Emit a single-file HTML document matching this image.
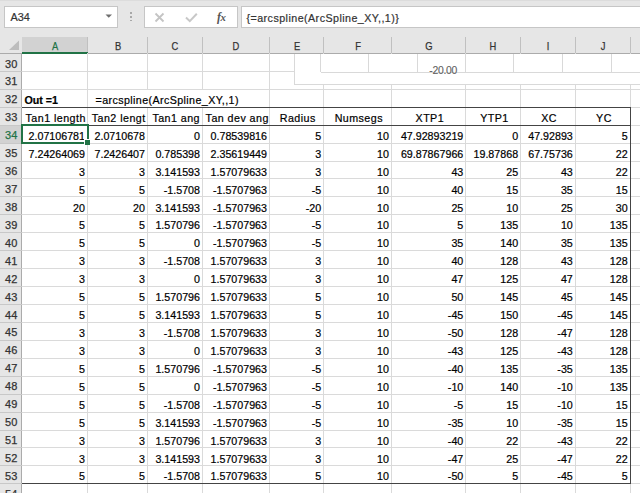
<!DOCTYPE html><html><head><meta charset="utf-8"><style>
*{margin:0;padding:0;box-sizing:border-box}
html,body{width:640px;height:493px;overflow:hidden;background:#e6e6e6;font-family:"Liberation Sans",sans-serif;position:relative}
.a{position:absolute}
.hl{position:absolute;height:1px}
.vl{position:absolute;width:1px}
.t{position:absolute;white-space:pre;font-size:10.7px;line-height:12px;color:#000;-webkit-text-stroke:0.2px currentColor}
.r{text-align:right}
.c{text-align:center}
.hd{position:absolute;font-size:11px;line-height:12px;color:#444;text-align:center;white-space:pre;-webkit-text-stroke:0.25px currentColor}
</style></head><body><div class="hl" style="left:0;top:0;width:640px;background:#dcdcdc"></div>
<div class="a" style="left:4px;top:6px;width:114px;height:22px;background:#fff;border:1px solid #c6c6c6"></div>
<div class="t" style="left:10.5px;top:11.1px;font-size:10.9px;color:#333">A34</div>
<svg class="a" style="left:104px;top:13px" width="10" height="6"><path d="M1.5 1.5 L8 1.5 L4.75 4.8 Z" fill="#6e6e6e"/></svg>
<div class="a" style="left:130.2px;top:12.4px;width:1.5px;height:1.5px;background:#a8a8a8"></div>
<div class="a" style="left:130.2px;top:16.0px;width:1.5px;height:1.5px;background:#a8a8a8"></div>
<div class="a" style="left:130.2px;top:19.599999999999998px;width:1.5px;height:1.5px;background:#a8a8a8"></div>
<div class="a" style="left:144px;top:6px;width:94px;height:22px;background:#fff;border:1px solid #c6c6c6"></div>
<svg class="a" style="left:154px;top:12px" width="12" height="11"><path d="M1.5 1.5 L9.5 9.5 M9.5 1.5 L1.5 9.5" stroke="#c4c4c4" stroke-width="1.8" fill="none"/></svg>
<svg class="a" style="left:185px;top:12px" width="13" height="11"><path d="M1 5.5 L4.8 9.2 L11.8 1.8" stroke="#c8c8c8" stroke-width="2" fill="none"/></svg>
<div class="a" style="left:217px;top:10.6px;font-family:'Liberation Serif',serif;font-style:italic;font-weight:bold;font-size:11.8px;line-height:13px;color:#555;letter-spacing:-0.4px">f<span style="font-size:10.8px">x</span></div>
<div class="a" style="left:240.5px;top:6px;width:410px;height:22px;background:#fff;border:1px solid #c6c6c6"></div>
<div class="t" style="left:246.5px;top:12px;letter-spacing:0.45px;color:#333">{=arcspline(ArcSpline_XY,,1)}</div>
<div class="a" style="left:21.5px;top:53.3px;width:640px;height:500px;background:#fff"></div>
<div class="a" style="left:0;top:37px;width:640px;height:16.299999999999997px;background:#e6e6e6"></div>
<div class="a" style="left:21.5px;top:37px;width:66.0px;height:16.299999999999997px;background:#d2d2d2"></div>
<svg class="a" style="left:8px;top:40px" width="12" height="12"><path d="M11 0.5 L11 10 L1 10 Z" fill="#bdbdbd"/></svg>
<div class="a" style="left:0;top:53.3px;width:21.5px;height:500px;background:#e6e6e6"></div>
<div class="a" style="left:0;top:125.19px;width:21.5px;height:17.93px;background:#d2d2d2"></div>
<div class="hl" style="left:0;top:52.8px;width:640px;background:#ababab"></div>
<div class="vl" style="left:21.0px;top:53.3px;height:500px;background:#ababab"></div>
<div class="vl" style="left:87.0px;top:37px;height:16.299999999999997px;background:#c0c0c0"></div>
<div class="vl" style="left:147.0px;top:37px;height:16.299999999999997px;background:#c0c0c0"></div>
<div class="vl" style="left:202.0px;top:37px;height:16.299999999999997px;background:#c0c0c0"></div>
<div class="vl" style="left:269.0px;top:37px;height:16.299999999999997px;background:#c0c0c0"></div>
<div class="vl" style="left:323.2px;top:37px;height:16.299999999999997px;background:#c0c0c0"></div>
<div class="vl" style="left:391.0px;top:37px;height:16.299999999999997px;background:#c0c0c0"></div>
<div class="vl" style="left:465.3px;top:37px;height:16.299999999999997px;background:#c0c0c0"></div>
<div class="vl" style="left:520.1px;top:37px;height:16.299999999999997px;background:#c0c0c0"></div>
<div class="vl" style="left:574.8px;top:37px;height:16.299999999999997px;background:#c0c0c0"></div>
<div class="vl" style="left:629.7px;top:37px;height:16.299999999999997px;background:#c0c0c0"></div>
<div class="vl" style="left:684.5px;top:37px;height:16.299999999999997px;background:#c0c0c0"></div>
<div class="hd" style="left:34.5px;top:39.8px;width:40px;color:#217346;transform:scaleX(0.85)">A</div>
<div class="hd" style="left:97.5px;top:39.8px;width:40px;color:#333;transform:scaleX(0.85)">B</div>
<div class="hd" style="left:155.0px;top:39.8px;width:40px;color:#333;transform:scaleX(0.85)">C</div>
<div class="hd" style="left:216.0px;top:39.8px;width:40px;color:#333;transform:scaleX(0.85)">D</div>
<div class="hd" style="left:276.6px;top:39.8px;width:40px;color:#333;transform:scaleX(0.85)">E</div>
<div class="hd" style="left:337.6px;top:39.8px;width:40px;color:#333;transform:scaleX(0.85)">F</div>
<div class="hd" style="left:408.65px;top:39.8px;width:40px;color:#333;transform:scaleX(0.85)">G</div>
<div class="hd" style="left:473.20000000000005px;top:39.8px;width:40px;color:#333;transform:scaleX(0.85)">H</div>
<div class="hd" style="left:527.95px;top:39.8px;width:40px;color:#333;transform:scaleX(0.85)">I</div>
<div class="hd" style="left:582.75px;top:39.8px;width:40px;color:#333;transform:scaleX(0.85)">J</div>
<div class="a" style="left:21.5px;top:51.8px;width:66.0px;height:2px;background:#217346"></div>
<div class="vl" style="left:87.0px;top:53.3px;height:500px;background:#dadada"></div>
<div class="vl" style="left:147.0px;top:53.3px;height:500px;background:#dadada"></div>
<div class="vl" style="left:202.0px;top:53.3px;height:500px;background:#dadada"></div>
<div class="vl" style="left:269.0px;top:53.3px;height:500px;background:#dadada"></div>
<div class="vl" style="left:323.2px;top:53.3px;height:500px;background:#dadada"></div>
<div class="vl" style="left:391.0px;top:53.3px;height:500px;background:#dadada"></div>
<div class="vl" style="left:465.3px;top:53.3px;height:500px;background:#dadada"></div>
<div class="vl" style="left:520.1px;top:53.3px;height:500px;background:#dadada"></div>
<div class="vl" style="left:574.8px;top:53.3px;height:500px;background:#dadada"></div>
<div class="vl" style="left:629.7px;top:53.3px;height:500px;background:#dadada"></div>
<div class="vl" style="left:684.5px;top:53.3px;height:500px;background:#dadada"></div>
<div class="hl" style="left:0;top:70.9px;width:21.5px;background:#c8c8c8"></div>
<div class="hl" style="left:21.5px;top:70.9px;width:640px;background:#dadada"></div>
<div class="hl" style="left:0;top:88.83000000000001px;width:21.5px;background:#c8c8c8"></div>
<div class="hl" style="left:21.5px;top:88.83000000000001px;width:640px;background:#dadada"></div>
<div class="hl" style="left:0;top:106.76px;width:21.5px;background:#c8c8c8"></div>
<div class="hl" style="left:21.5px;top:106.76px;width:640px;background:#dadada"></div>
<div class="hl" style="left:0;top:124.69px;width:21.5px;background:#c8c8c8"></div>
<div class="hl" style="left:21.5px;top:124.69px;width:640px;background:#dadada"></div>
<div class="hl" style="left:0;top:142.62px;width:21.5px;background:#c8c8c8"></div>
<div class="hl" style="left:21.5px;top:142.62px;width:640px;background:#dadada"></div>
<div class="hl" style="left:0;top:160.55px;width:21.5px;background:#c8c8c8"></div>
<div class="hl" style="left:21.5px;top:160.55px;width:640px;background:#dadada"></div>
<div class="hl" style="left:0;top:178.48000000000002px;width:21.5px;background:#c8c8c8"></div>
<div class="hl" style="left:21.5px;top:178.48000000000002px;width:640px;background:#dadada"></div>
<div class="hl" style="left:0;top:196.41px;width:21.5px;background:#c8c8c8"></div>
<div class="hl" style="left:21.5px;top:196.41px;width:640px;background:#dadada"></div>
<div class="hl" style="left:0;top:214.34px;width:21.5px;background:#c8c8c8"></div>
<div class="hl" style="left:21.5px;top:214.34px;width:640px;background:#dadada"></div>
<div class="hl" style="left:0;top:232.27px;width:21.5px;background:#c8c8c8"></div>
<div class="hl" style="left:21.5px;top:232.27px;width:640px;background:#dadada"></div>
<div class="hl" style="left:0;top:250.20000000000002px;width:21.5px;background:#c8c8c8"></div>
<div class="hl" style="left:21.5px;top:250.20000000000002px;width:640px;background:#dadada"></div>
<div class="hl" style="left:0;top:268.13px;width:21.5px;background:#c8c8c8"></div>
<div class="hl" style="left:21.5px;top:268.13px;width:640px;background:#dadada"></div>
<div class="hl" style="left:0;top:286.06px;width:21.5px;background:#c8c8c8"></div>
<div class="hl" style="left:21.5px;top:286.06px;width:640px;background:#dadada"></div>
<div class="hl" style="left:0;top:303.99px;width:21.5px;background:#c8c8c8"></div>
<div class="hl" style="left:21.5px;top:303.99px;width:640px;background:#dadada"></div>
<div class="hl" style="left:0;top:321.91999999999996px;width:21.5px;background:#c8c8c8"></div>
<div class="hl" style="left:21.5px;top:321.91999999999996px;width:640px;background:#dadada"></div>
<div class="hl" style="left:0;top:339.85px;width:21.5px;background:#c8c8c8"></div>
<div class="hl" style="left:21.5px;top:339.85px;width:640px;background:#dadada"></div>
<div class="hl" style="left:0;top:357.78px;width:21.5px;background:#c8c8c8"></div>
<div class="hl" style="left:21.5px;top:357.78px;width:640px;background:#dadada"></div>
<div class="hl" style="left:0;top:375.71000000000004px;width:21.5px;background:#c8c8c8"></div>
<div class="hl" style="left:21.5px;top:375.71000000000004px;width:640px;background:#dadada"></div>
<div class="hl" style="left:0;top:393.64px;width:21.5px;background:#c8c8c8"></div>
<div class="hl" style="left:21.5px;top:393.64px;width:640px;background:#dadada"></div>
<div class="hl" style="left:0;top:411.57000000000005px;width:21.5px;background:#c8c8c8"></div>
<div class="hl" style="left:21.5px;top:411.57000000000005px;width:640px;background:#dadada"></div>
<div class="hl" style="left:0;top:429.5px;width:21.5px;background:#c8c8c8"></div>
<div class="hl" style="left:21.5px;top:429.5px;width:640px;background:#dadada"></div>
<div class="hl" style="left:0;top:447.42999999999995px;width:21.5px;background:#c8c8c8"></div>
<div class="hl" style="left:21.5px;top:447.42999999999995px;width:640px;background:#dadada"></div>
<div class="hl" style="left:0;top:465.36px;width:21.5px;background:#c8c8c8"></div>
<div class="hl" style="left:21.5px;top:465.36px;width:640px;background:#dadada"></div>
<div class="hl" style="left:0;top:483.28999999999996px;width:21.5px;background:#c8c8c8"></div>
<div class="hl" style="left:21.5px;top:483.28999999999996px;width:640px;background:#dadada"></div>
<div class="hl" style="left:0;top:501.22px;width:21.5px;background:#c8c8c8"></div>
<div class="hl" style="left:21.5px;top:501.22px;width:640px;background:#dadada"></div>
<div class="hd" style="left:0.7px;top:57.50000000000001px;width:21px;color:#333">30</div>
<div class="hd" style="left:0.7px;top:75.43px;width:21px;color:#333">31</div>
<div class="hd" style="left:0.7px;top:93.36px;width:21px;color:#333">32</div>
<div class="hd" style="left:0.7px;top:111.28999999999999px;width:21px;color:#333">33</div>
<div class="hd" style="left:0.7px;top:129.22px;width:21px;color:#217346">34</div>
<div class="hd" style="left:0.7px;top:147.15px;width:21px;color:#333">35</div>
<div class="hd" style="left:0.7px;top:165.08px;width:21px;color:#333">36</div>
<div class="hd" style="left:0.7px;top:183.01px;width:21px;color:#333">37</div>
<div class="hd" style="left:0.7px;top:200.94px;width:21px;color:#333">38</div>
<div class="hd" style="left:0.7px;top:218.87px;width:21px;color:#333">39</div>
<div class="hd" style="left:0.7px;top:236.8px;width:21px;color:#333">40</div>
<div class="hd" style="left:0.7px;top:254.73px;width:21px;color:#333">41</div>
<div class="hd" style="left:0.7px;top:272.66px;width:21px;color:#333">42</div>
<div class="hd" style="left:0.7px;top:290.59000000000003px;width:21px;color:#333">43</div>
<div class="hd" style="left:0.7px;top:308.52px;width:21px;color:#333">44</div>
<div class="hd" style="left:0.7px;top:326.45000000000005px;width:21px;color:#333">45</div>
<div class="hd" style="left:0.7px;top:344.38px;width:21px;color:#333">46</div>
<div class="hd" style="left:0.7px;top:362.31000000000006px;width:21px;color:#333">47</div>
<div class="hd" style="left:0.7px;top:380.24px;width:21px;color:#333">48</div>
<div class="hd" style="left:0.7px;top:398.1700000000001px;width:21px;color:#333">49</div>
<div class="hd" style="left:0.7px;top:416.1px;width:21px;color:#333">50</div>
<div class="hd" style="left:0.7px;top:434.03px;width:21px;color:#333">51</div>
<div class="hd" style="left:0.7px;top:451.96000000000004px;width:21px;color:#333">52</div>
<div class="hd" style="left:0.7px;top:469.89px;width:21px;color:#333">53</div>
<div class="hd" style="left:0.7px;top:487.82000000000005px;width:21px;color:#333">54</div>
<div class="a" style="left:294px;top:54px;width:400px;height:30.8px;background:#fff;border-left:1px solid #d9d9d9;border-bottom:1px solid #d9d9d9"></div>
<div class="hl" style="left:320.5px;top:71.8px;width:400px;background:#d9d9d9"></div>
<div class="vl" style="left:320px;top:54px;height:18px;background:#d9d9d9"></div>
<div class="vl" style="left:368px;top:54px;height:18px;background:#d9d9d9"></div>
<div class="vl" style="left:417px;top:54px;height:18px;background:#d9d9d9"></div>
<div class="vl" style="left:465px;top:54px;height:18px;background:#d9d9d9"></div>
<div class="vl" style="left:513px;top:54px;height:18px;background:#d9d9d9"></div>
<div class="vl" style="left:562px;top:54px;height:18px;background:#d9d9d9"></div>
<div class="vl" style="left:611px;top:54px;height:18px;background:#d9d9d9"></div>
<div class="t" style="left:429.3px;top:64.6px;color:#606060;font-size:10.4px;letter-spacing:-0.3px;-webkit-text-stroke:0.1px #606060">-20.00</div>
<div class="a" style="left:88px;top:89.83000000000001px;width:181px;height:17px;background:#fff"></div>
<div class="t" style="left:24.5px;top:93.86px;font-weight:bold">Out =1</div>
<div class="t" style="left:95.5px;top:93.86px;letter-spacing:0.4px">=arcspline(ArcSpline_XY,,1)</div>
<div class="t c" style="left:23.7px;top:111.89px;width:64.0px;overflow:hidden;letter-spacing:0.45px">Tan1 length</div>
<div class="t c" style="left:89.7px;top:111.89px;width:58.0px;overflow:hidden;letter-spacing:0.45px">Tan2 lengt</div>
<div class="t c" style="left:149.7px;top:111.89px;width:53.0px;overflow:hidden;letter-spacing:0.45px">Tan1 ang</div>
<div class="t c" style="left:204.7px;top:111.89px;width:65.0px;overflow:hidden;letter-spacing:0.45px">Tan dev ang</div>
<div class="t c" style="left:271.7px;top:111.89px;width:52.19999999999999px;overflow:hidden;letter-spacing:0.45px">Radius</div>
<div class="t c" style="left:325.9px;top:111.89px;width:65.80000000000001px;overflow:hidden;letter-spacing:0.45px">Numsegs</div>
<div class="t c" style="left:393.7px;top:111.89px;width:72.30000000000001px;overflow:hidden;letter-spacing:0.45px">XTP1</div>
<div class="t c" style="left:468.0px;top:111.89px;width:52.80000000000001px;overflow:hidden;letter-spacing:0.45px">YTP1</div>
<div class="t c" style="left:522.8000000000001px;top:111.89px;width:52.69999999999993px;overflow:hidden;letter-spacing:0.45px">XC</div>
<div class="t c" style="left:577.5px;top:111.89px;width:52.90000000000009px;overflow:hidden;letter-spacing:0.45px">YC</div>
<div class="t r" style="left:21.5px;top:129.82px;width:63.5px">2.07106781</div>
<div class="t r" style="left:87.5px;top:129.82px;width:57.5px">2.0710678</div>
<div class="t r" style="left:147.5px;top:129.82px;width:52.5px">0</div>
<div class="t r" style="left:202.5px;top:129.82px;width:64.5px">0.78539816</div>
<div class="t r" style="left:269.5px;top:129.82px;width:51.69999999999999px">5</div>
<div class="t r" style="left:323.7px;top:129.82px;width:65.30000000000001px">10</div>
<div class="t r" style="left:391.5px;top:129.82px;width:71.80000000000001px">47.92893219</div>
<div class="t r" style="left:465.8px;top:129.82px;width:52.30000000000001px">0</div>
<div class="t r" style="left:520.6px;top:129.82px;width:52.19999999999993px">47.92893</div>
<div class="t r" style="left:575.3px;top:129.82px;width:52.40000000000009px">5</div>
<div class="t r" style="left:21.5px;top:147.75px;width:63.5px">7.24264069</div>
<div class="t r" style="left:87.5px;top:147.75px;width:57.5px">7.2426407</div>
<div class="t r" style="left:147.5px;top:147.75px;width:52.5px">0.785398</div>
<div class="t r" style="left:202.5px;top:147.75px;width:64.5px">2.35619449</div>
<div class="t r" style="left:269.5px;top:147.75px;width:51.69999999999999px">3</div>
<div class="t r" style="left:323.7px;top:147.75px;width:65.30000000000001px">10</div>
<div class="t r" style="left:391.5px;top:147.75px;width:71.80000000000001px">69.87867966</div>
<div class="t r" style="left:465.8px;top:147.75px;width:52.30000000000001px">19.87868</div>
<div class="t r" style="left:520.6px;top:147.75px;width:52.19999999999993px">67.75736</div>
<div class="t r" style="left:575.3px;top:147.75px;width:52.40000000000009px">22</div>
<div class="t r" style="left:21.5px;top:165.68px;width:63.5px">3</div>
<div class="t r" style="left:87.5px;top:165.68px;width:57.5px">3</div>
<div class="t r" style="left:147.5px;top:165.68px;width:52.5px">3.141593</div>
<div class="t r" style="left:202.5px;top:165.68px;width:64.5px">1.57079633</div>
<div class="t r" style="left:269.5px;top:165.68px;width:51.69999999999999px">3</div>
<div class="t r" style="left:323.7px;top:165.68px;width:65.30000000000001px">10</div>
<div class="t r" style="left:391.5px;top:165.68px;width:71.80000000000001px">43</div>
<div class="t r" style="left:465.8px;top:165.68px;width:52.30000000000001px">25</div>
<div class="t r" style="left:520.6px;top:165.68px;width:52.19999999999993px">43</div>
<div class="t r" style="left:575.3px;top:165.68px;width:52.40000000000009px">22</div>
<div class="t r" style="left:21.5px;top:183.60999999999999px;width:63.5px">5</div>
<div class="t r" style="left:87.5px;top:183.60999999999999px;width:57.5px">5</div>
<div class="t r" style="left:147.5px;top:183.60999999999999px;width:52.5px">-1.5708</div>
<div class="t r" style="left:202.5px;top:183.60999999999999px;width:64.5px">-1.5707963</div>
<div class="t r" style="left:269.5px;top:183.60999999999999px;width:51.69999999999999px">-5</div>
<div class="t r" style="left:323.7px;top:183.60999999999999px;width:65.30000000000001px">10</div>
<div class="t r" style="left:391.5px;top:183.60999999999999px;width:71.80000000000001px">40</div>
<div class="t r" style="left:465.8px;top:183.60999999999999px;width:52.30000000000001px">15</div>
<div class="t r" style="left:520.6px;top:183.60999999999999px;width:52.19999999999993px">35</div>
<div class="t r" style="left:575.3px;top:183.60999999999999px;width:52.40000000000009px">15</div>
<div class="t r" style="left:21.5px;top:201.54px;width:63.5px">20</div>
<div class="t r" style="left:87.5px;top:201.54px;width:57.5px">20</div>
<div class="t r" style="left:147.5px;top:201.54px;width:52.5px">3.141593</div>
<div class="t r" style="left:202.5px;top:201.54px;width:64.5px">-1.5707963</div>
<div class="t r" style="left:269.5px;top:201.54px;width:51.69999999999999px">-20</div>
<div class="t r" style="left:323.7px;top:201.54px;width:65.30000000000001px">10</div>
<div class="t r" style="left:391.5px;top:201.54px;width:71.80000000000001px">25</div>
<div class="t r" style="left:465.8px;top:201.54px;width:52.30000000000001px">10</div>
<div class="t r" style="left:520.6px;top:201.54px;width:52.19999999999993px">25</div>
<div class="t r" style="left:575.3px;top:201.54px;width:52.40000000000009px">30</div>
<div class="t r" style="left:21.5px;top:219.47px;width:63.5px">5</div>
<div class="t r" style="left:87.5px;top:219.47px;width:57.5px">5</div>
<div class="t r" style="left:147.5px;top:219.47px;width:52.5px">1.570796</div>
<div class="t r" style="left:202.5px;top:219.47px;width:64.5px">-1.5707963</div>
<div class="t r" style="left:269.5px;top:219.47px;width:51.69999999999999px">-5</div>
<div class="t r" style="left:323.7px;top:219.47px;width:65.30000000000001px">10</div>
<div class="t r" style="left:391.5px;top:219.47px;width:71.80000000000001px">5</div>
<div class="t r" style="left:465.8px;top:219.47px;width:52.30000000000001px">135</div>
<div class="t r" style="left:520.6px;top:219.47px;width:52.19999999999993px">10</div>
<div class="t r" style="left:575.3px;top:219.47px;width:52.40000000000009px">135</div>
<div class="t r" style="left:21.5px;top:237.4px;width:63.5px">5</div>
<div class="t r" style="left:87.5px;top:237.4px;width:57.5px">5</div>
<div class="t r" style="left:147.5px;top:237.4px;width:52.5px">0</div>
<div class="t r" style="left:202.5px;top:237.4px;width:64.5px">-1.5707963</div>
<div class="t r" style="left:269.5px;top:237.4px;width:51.69999999999999px">-5</div>
<div class="t r" style="left:323.7px;top:237.4px;width:65.30000000000001px">10</div>
<div class="t r" style="left:391.5px;top:237.4px;width:71.80000000000001px">35</div>
<div class="t r" style="left:465.8px;top:237.4px;width:52.30000000000001px">140</div>
<div class="t r" style="left:520.6px;top:237.4px;width:52.19999999999993px">35</div>
<div class="t r" style="left:575.3px;top:237.4px;width:52.40000000000009px">135</div>
<div class="t r" style="left:21.5px;top:255.32999999999998px;width:63.5px">3</div>
<div class="t r" style="left:87.5px;top:255.32999999999998px;width:57.5px">3</div>
<div class="t r" style="left:147.5px;top:255.32999999999998px;width:52.5px">-1.5708</div>
<div class="t r" style="left:202.5px;top:255.32999999999998px;width:64.5px">1.57079633</div>
<div class="t r" style="left:269.5px;top:255.32999999999998px;width:51.69999999999999px">3</div>
<div class="t r" style="left:323.7px;top:255.32999999999998px;width:65.30000000000001px">10</div>
<div class="t r" style="left:391.5px;top:255.32999999999998px;width:71.80000000000001px">40</div>
<div class="t r" style="left:465.8px;top:255.32999999999998px;width:52.30000000000001px">128</div>
<div class="t r" style="left:520.6px;top:255.32999999999998px;width:52.19999999999993px">43</div>
<div class="t r" style="left:575.3px;top:255.32999999999998px;width:52.40000000000009px">128</div>
<div class="t r" style="left:21.5px;top:273.26px;width:63.5px">3</div>
<div class="t r" style="left:87.5px;top:273.26px;width:57.5px">3</div>
<div class="t r" style="left:147.5px;top:273.26px;width:52.5px">0</div>
<div class="t r" style="left:202.5px;top:273.26px;width:64.5px">1.57079633</div>
<div class="t r" style="left:269.5px;top:273.26px;width:51.69999999999999px">3</div>
<div class="t r" style="left:323.7px;top:273.26px;width:65.30000000000001px">10</div>
<div class="t r" style="left:391.5px;top:273.26px;width:71.80000000000001px">47</div>
<div class="t r" style="left:465.8px;top:273.26px;width:52.30000000000001px">125</div>
<div class="t r" style="left:520.6px;top:273.26px;width:52.19999999999993px">47</div>
<div class="t r" style="left:575.3px;top:273.26px;width:52.40000000000009px">128</div>
<div class="t r" style="left:21.5px;top:291.19px;width:63.5px">5</div>
<div class="t r" style="left:87.5px;top:291.19px;width:57.5px">5</div>
<div class="t r" style="left:147.5px;top:291.19px;width:52.5px">1.570796</div>
<div class="t r" style="left:202.5px;top:291.19px;width:64.5px">1.57079633</div>
<div class="t r" style="left:269.5px;top:291.19px;width:51.69999999999999px">5</div>
<div class="t r" style="left:323.7px;top:291.19px;width:65.30000000000001px">10</div>
<div class="t r" style="left:391.5px;top:291.19px;width:71.80000000000001px">50</div>
<div class="t r" style="left:465.8px;top:291.19px;width:52.30000000000001px">145</div>
<div class="t r" style="left:520.6px;top:291.19px;width:52.19999999999993px">45</div>
<div class="t r" style="left:575.3px;top:291.19px;width:52.40000000000009px">145</div>
<div class="t r" style="left:21.5px;top:309.11999999999995px;width:63.5px">5</div>
<div class="t r" style="left:87.5px;top:309.11999999999995px;width:57.5px">5</div>
<div class="t r" style="left:147.5px;top:309.11999999999995px;width:52.5px">3.141593</div>
<div class="t r" style="left:202.5px;top:309.11999999999995px;width:64.5px">1.57079633</div>
<div class="t r" style="left:269.5px;top:309.11999999999995px;width:51.69999999999999px">5</div>
<div class="t r" style="left:323.7px;top:309.11999999999995px;width:65.30000000000001px">10</div>
<div class="t r" style="left:391.5px;top:309.11999999999995px;width:71.80000000000001px">-45</div>
<div class="t r" style="left:465.8px;top:309.11999999999995px;width:52.30000000000001px">150</div>
<div class="t r" style="left:520.6px;top:309.11999999999995px;width:52.19999999999993px">-45</div>
<div class="t r" style="left:575.3px;top:309.11999999999995px;width:52.40000000000009px">145</div>
<div class="t r" style="left:21.5px;top:327.05px;width:63.5px">3</div>
<div class="t r" style="left:87.5px;top:327.05px;width:57.5px">3</div>
<div class="t r" style="left:147.5px;top:327.05px;width:52.5px">-1.5708</div>
<div class="t r" style="left:202.5px;top:327.05px;width:64.5px">1.57079633</div>
<div class="t r" style="left:269.5px;top:327.05px;width:51.69999999999999px">3</div>
<div class="t r" style="left:323.7px;top:327.05px;width:65.30000000000001px">10</div>
<div class="t r" style="left:391.5px;top:327.05px;width:71.80000000000001px">-50</div>
<div class="t r" style="left:465.8px;top:327.05px;width:52.30000000000001px">128</div>
<div class="t r" style="left:520.6px;top:327.05px;width:52.19999999999993px">-47</div>
<div class="t r" style="left:575.3px;top:327.05px;width:52.40000000000009px">128</div>
<div class="t r" style="left:21.5px;top:344.97999999999996px;width:63.5px">3</div>
<div class="t r" style="left:87.5px;top:344.97999999999996px;width:57.5px">3</div>
<div class="t r" style="left:147.5px;top:344.97999999999996px;width:52.5px">0</div>
<div class="t r" style="left:202.5px;top:344.97999999999996px;width:64.5px">1.57079633</div>
<div class="t r" style="left:269.5px;top:344.97999999999996px;width:51.69999999999999px">3</div>
<div class="t r" style="left:323.7px;top:344.97999999999996px;width:65.30000000000001px">10</div>
<div class="t r" style="left:391.5px;top:344.97999999999996px;width:71.80000000000001px">-43</div>
<div class="t r" style="left:465.8px;top:344.97999999999996px;width:52.30000000000001px">125</div>
<div class="t r" style="left:520.6px;top:344.97999999999996px;width:52.19999999999993px">-43</div>
<div class="t r" style="left:575.3px;top:344.97999999999996px;width:52.40000000000009px">128</div>
<div class="t r" style="left:21.5px;top:362.91px;width:63.5px">5</div>
<div class="t r" style="left:87.5px;top:362.91px;width:57.5px">5</div>
<div class="t r" style="left:147.5px;top:362.91px;width:52.5px">1.570796</div>
<div class="t r" style="left:202.5px;top:362.91px;width:64.5px">-1.5707963</div>
<div class="t r" style="left:269.5px;top:362.91px;width:51.69999999999999px">-5</div>
<div class="t r" style="left:323.7px;top:362.91px;width:65.30000000000001px">10</div>
<div class="t r" style="left:391.5px;top:362.91px;width:71.80000000000001px">-40</div>
<div class="t r" style="left:465.8px;top:362.91px;width:52.30000000000001px">135</div>
<div class="t r" style="left:520.6px;top:362.91px;width:52.19999999999993px">-35</div>
<div class="t r" style="left:575.3px;top:362.91px;width:52.40000000000009px">135</div>
<div class="t r" style="left:21.5px;top:380.84px;width:63.5px">5</div>
<div class="t r" style="left:87.5px;top:380.84px;width:57.5px">5</div>
<div class="t r" style="left:147.5px;top:380.84px;width:52.5px">0</div>
<div class="t r" style="left:202.5px;top:380.84px;width:64.5px">-1.5707963</div>
<div class="t r" style="left:269.5px;top:380.84px;width:51.69999999999999px">-5</div>
<div class="t r" style="left:323.7px;top:380.84px;width:65.30000000000001px">10</div>
<div class="t r" style="left:391.5px;top:380.84px;width:71.80000000000001px">-10</div>
<div class="t r" style="left:465.8px;top:380.84px;width:52.30000000000001px">140</div>
<div class="t r" style="left:520.6px;top:380.84px;width:52.19999999999993px">-10</div>
<div class="t r" style="left:575.3px;top:380.84px;width:52.40000000000009px">135</div>
<div class="t r" style="left:21.5px;top:398.77000000000004px;width:63.5px">5</div>
<div class="t r" style="left:87.5px;top:398.77000000000004px;width:57.5px">5</div>
<div class="t r" style="left:147.5px;top:398.77000000000004px;width:52.5px">-1.5708</div>
<div class="t r" style="left:202.5px;top:398.77000000000004px;width:64.5px">-1.5707963</div>
<div class="t r" style="left:269.5px;top:398.77000000000004px;width:51.69999999999999px">-5</div>
<div class="t r" style="left:323.7px;top:398.77000000000004px;width:65.30000000000001px">10</div>
<div class="t r" style="left:391.5px;top:398.77000000000004px;width:71.80000000000001px">-5</div>
<div class="t r" style="left:465.8px;top:398.77000000000004px;width:52.30000000000001px">15</div>
<div class="t r" style="left:520.6px;top:398.77000000000004px;width:52.19999999999993px">-10</div>
<div class="t r" style="left:575.3px;top:398.77000000000004px;width:52.40000000000009px">15</div>
<div class="t r" style="left:21.5px;top:416.7px;width:63.5px">5</div>
<div class="t r" style="left:87.5px;top:416.7px;width:57.5px">5</div>
<div class="t r" style="left:147.5px;top:416.7px;width:52.5px">3.141593</div>
<div class="t r" style="left:202.5px;top:416.7px;width:64.5px">-1.5707963</div>
<div class="t r" style="left:269.5px;top:416.7px;width:51.69999999999999px">-5</div>
<div class="t r" style="left:323.7px;top:416.7px;width:65.30000000000001px">10</div>
<div class="t r" style="left:391.5px;top:416.7px;width:71.80000000000001px">-35</div>
<div class="t r" style="left:465.8px;top:416.7px;width:52.30000000000001px">10</div>
<div class="t r" style="left:520.6px;top:416.7px;width:52.19999999999993px">-35</div>
<div class="t r" style="left:575.3px;top:416.7px;width:52.40000000000009px">15</div>
<div class="t r" style="left:21.5px;top:434.62999999999994px;width:63.5px">3</div>
<div class="t r" style="left:87.5px;top:434.62999999999994px;width:57.5px">3</div>
<div class="t r" style="left:147.5px;top:434.62999999999994px;width:52.5px">1.570796</div>
<div class="t r" style="left:202.5px;top:434.62999999999994px;width:64.5px">1.57079633</div>
<div class="t r" style="left:269.5px;top:434.62999999999994px;width:51.69999999999999px">3</div>
<div class="t r" style="left:323.7px;top:434.62999999999994px;width:65.30000000000001px">10</div>
<div class="t r" style="left:391.5px;top:434.62999999999994px;width:71.80000000000001px">-40</div>
<div class="t r" style="left:465.8px;top:434.62999999999994px;width:52.30000000000001px">22</div>
<div class="t r" style="left:520.6px;top:434.62999999999994px;width:52.19999999999993px">-43</div>
<div class="t r" style="left:575.3px;top:434.62999999999994px;width:52.40000000000009px">22</div>
<div class="t r" style="left:21.5px;top:452.56px;width:63.5px">3</div>
<div class="t r" style="left:87.5px;top:452.56px;width:57.5px">3</div>
<div class="t r" style="left:147.5px;top:452.56px;width:52.5px">3.141593</div>
<div class="t r" style="left:202.5px;top:452.56px;width:64.5px">1.57079633</div>
<div class="t r" style="left:269.5px;top:452.56px;width:51.69999999999999px">3</div>
<div class="t r" style="left:323.7px;top:452.56px;width:65.30000000000001px">10</div>
<div class="t r" style="left:391.5px;top:452.56px;width:71.80000000000001px">-47</div>
<div class="t r" style="left:465.8px;top:452.56px;width:52.30000000000001px">25</div>
<div class="t r" style="left:520.6px;top:452.56px;width:52.19999999999993px">-47</div>
<div class="t r" style="left:575.3px;top:452.56px;width:52.40000000000009px">22</div>
<div class="t r" style="left:21.5px;top:470.48999999999995px;width:63.5px">5</div>
<div class="t r" style="left:87.5px;top:470.48999999999995px;width:57.5px">5</div>
<div class="t r" style="left:147.5px;top:470.48999999999995px;width:52.5px">-1.5708</div>
<div class="t r" style="left:202.5px;top:470.48999999999995px;width:64.5px">1.57079633</div>
<div class="t r" style="left:269.5px;top:470.48999999999995px;width:51.69999999999999px">5</div>
<div class="t r" style="left:323.7px;top:470.48999999999995px;width:65.30000000000001px">10</div>
<div class="t r" style="left:391.5px;top:470.48999999999995px;width:71.80000000000001px">-50</div>
<div class="t r" style="left:465.8px;top:470.48999999999995px;width:52.30000000000001px">5</div>
<div class="t r" style="left:520.6px;top:470.48999999999995px;width:52.19999999999993px">-45</div>
<div class="t r" style="left:575.3px;top:470.48999999999995px;width:52.40000000000009px">5</div>
<div class="a" style="left:21.5px;top:106.76px;width:609.2px;height:377.53px;border:1px solid #444;border-left:none"></div>
<div class="hl" style="left:21.5px;top:124.69px;width:608.7px;background:#444"></div>
<div class="a" style="left:20.5px;top:124px;width:68.5px;height:20px;border:2px solid #217346"></div>
<div class="a" style="left:85px;top:140px;width:5px;height:5px;background:#217346;box-shadow:-1px -1px 0 #fff"></div></body></html>
